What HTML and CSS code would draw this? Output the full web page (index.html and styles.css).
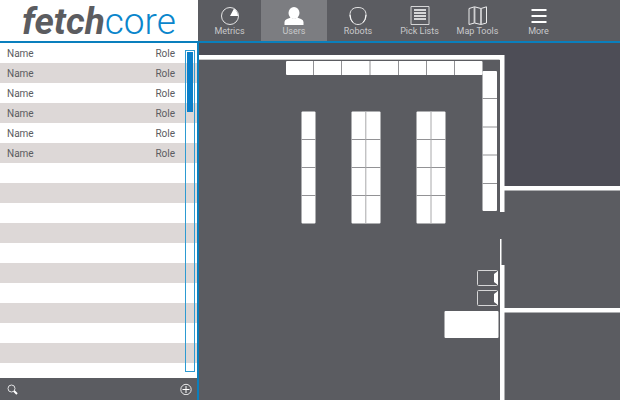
FILE: index.html
```html
<!DOCTYPE html>
<html lang="en">
<head>
<meta charset="utf-8">
<title>fetchcore</title>
<link rel="stylesheet" href="styles.css">
</head>
<body>
<div class="app">
  <header class="topbar">
    <div class="logo"><span class="logo-fetch">fetch</span><span class="logo-core">core</span></div>
    <nav class="nav">
      <button class="nav-item" type="button">
        <svg class="icon" viewBox="0 0 20 20"><circle cx="10" cy="10" r="8.5" fill="none" stroke="#e4e4e5"/><path d="M10 10L14 2.5Q17.5 5 18 10Z" fill="#fff"/></svg>
        <span>Metrics</span>
      </button>
      <button class="nav-item active" type="button">
        <svg class="icon" viewBox="0 0 20 20"><ellipse cx="10" cy="7" rx="5.5" ry="6" fill="#fff"/><path d="M.5 19V16Q.5 14 3 13L7 11.5Q10 14 13 11.5L17 13Q19.5 14 19.5 16V19Z" fill="#fff"/></svg>
        <span>Users</span>
      </button>
      <button class="nav-item" type="button">
        <svg class="icon" viewBox="0 0 20 20"><path d="M10 1.500C15.500 1.500 18 4.500 18 9C18 14 15 18.500 10 18.500S2 14 2 9C2 4.500 4.500 1.500 10 1.500Z" fill="none" stroke="#e4e4e5"/><path d="M2 9Q2.500 14 5 16.500M18 9Q17.500 14 15 16.500" fill="none" stroke="#fff"/></svg>
        <span>Robots</span>
      </button>
      <button class="nav-item" type="button">
        <svg class="icon" viewBox="0 0 20 20"><path d="M1 .5H19V18.500H1Z" fill="none" stroke="#d5d5d6"/><path d="M4 4H16M4 7H16M4 10H16M4 13H16" stroke="#fff" stroke-width="1.500"/></svg>
        <span>Pick Lists</span>
      </button>
      <button class="nav-item" type="button">
        <svg class="icon" viewBox="0 0 20 20"><path d="M1 2.500L6.500 .8L13 2.500L18.500 .8V17L13 18.500L6.500 17L1 18.500Z" fill="none" stroke="#ececed"/><path d="M6.500 1V17M13 2.500V18.500" stroke="#cfcfd1" stroke-width="1.800"/></svg>
        <span>Map Tools</span>
      </button>
      <button class="nav-item" type="button">
        <svg class="icon" viewBox="0 0 20 20"><path d="M2.500 4H17.500M2.500 10H17.500M2.500 16H17.500" stroke="#fff" stroke-width="2"/></svg>
        <span>More</span>
      </button>
    </nav>
  </header>
  <aside class="sidebar">
    <div class="list">
      <table class="users">
        <tbody>
          <tr><td>Name</td><td class="role">Role</td></tr>
          <tr><td>Name</td><td class="role">Role</td></tr>
          <tr><td>Name</td><td class="role">Role</td></tr>
          <tr><td>Name</td><td class="role">Role</td></tr>
          <tr><td>Name</td><td class="role">Role</td></tr>
          <tr><td>Name</td><td class="role">Role</td></tr>
        </tbody>
      </table>
      <div class="track"><div class="thumb"></div></div>
    </div>
    <div class="tools">
      <button class="tool" type="button" aria-label="Search"><svg viewBox="0 0 12 12"><circle cx="4.500" cy="5.500" r="3.500" fill="none" stroke="#e0e0e1"/><path d="M7 8L10 11" stroke="#fff" stroke-width="2"/></svg></button>
      <button class="tool" type="button" aria-label="Add"><svg viewBox="0 0 12 12"><circle cx="6" cy="6.500" r="5.200" fill="none" stroke="#e8e8e9"/><path d="M6 3V10M2.500 6.500H9.500" stroke="#fff"/></svg></button>
    </div>
  </aside>
  <main class="map">
    <svg class="floor" viewBox="199 43 421 357" preserveAspectRatio="xMinYMin slice" role="img" aria-label="Warehouse floor map">
      <path d="M199 43H620V188H504V57H199Z" fill="#4d4d56"/>
      <g fill="#fff">
        <path d="M199 55H504.500V212H500V60H199Z"/>
        <path d="M504 186H620V190.500H504ZM504 308H620V312.500H504Z"/>
        <path d="M500 239H501.500V265H504.500V400H500Z"/>
        <rect x="444.500" y="311" width="54" height="27" rx="1"/>
      </g>
      <path d="M199 59.500H499.500" stroke="#c9c9ca"/>
      <g fill="#fff">
        <rect x="286" y="61" width="196.500" height="14" rx="1"/>
        <rect x="482.500" y="71" width="14.500" height="140" rx="1"/>
        <rect x="301.500" y="111.500" width="14" height="112" rx="1"/>
        <rect x="351.500" y="111.500" width="29" height="112" rx="1"/>
        <rect x="416.500" y="111.500" width="29" height="112" rx="1"/>
      </g>
      <g stroke="#929295">
        <path d="M313.500 61V75M341.500 61V75M370 61V75M398.500 61V75M426.500 61V75M454.500 61V75"/>
        <path d="M482.500 98.500H497M482.500 127H497M482.500 155H497M482.500 183.500H497"/>
        <path d="M301.500 139.500H315.500M301.500 167.500H315.500M301.500 195.500H315.500M351.500 139.500H380.500M351.500 167.500H380.500M351.500 195.500H380.500M416.500 139.500H445.500M416.500 167.500H445.500M416.500 195.500H445.500"/>
        <path d="M365.800 112V223M431 112V223" stroke="#a8a8aa"/>
      </g>
      <g fill="none" stroke="#d6d6d7">
        <rect x="477.500" y="270.500" width="20" height="15" rx="1"/>
        <rect x="477.500" y="290.500" width="20" height="15" rx="1"/>
      </g>
      <path d="M498 271L494 274V282L498 285ZM498 291L494 294V302L498 305Z" fill="#fff"/>
    </svg>
  </main>
</div>
</body>
</html>
```
FILE: styles.css
```css
* {
  box-sizing: border-box;
}

body {
  margin: 0;
  font-family: Roboto, "Liberation Sans", sans-serif;
  font-size: 10px;
  color: #5b5c60;
}

button {
  border: 0;
  padding: 0;
  background: none;
  font: inherit;
  color: inherit;
}

.app {
  display: grid;
  grid-template-columns: 199px 1fr;
  grid-template-rows: auto 1fr;
  height: 100vh;
}

.topbar {
  grid-column: 1 / -1;
  display: grid;
  grid-template-columns: 198px 1fr;
  grid-template-rows: 41px;
  border-bottom: 2px solid #0a7fbd;
}

.logo {
  padding-left: 22px;
  font-size: 37px;
  line-height: 44px;
  white-space: nowrap;
}

.logo-fetch {
  font-weight: 700;
  font-style: italic;
}

.logo-core {
  font-weight: 300;
  color: #0a86cc;
}

.nav {
  display: grid;
  grid-template-columns: 63px 66px 62px 61px 55px 67px;
  background: #5b5c61;
}

.nav-item {
  display: flex;
  flex-direction: column;
  align-items: center;
  padding-top: 6px;
  font-size: 9px;
  line-height: 10px;
  color: #c9c9cb;
  white-space: nowrap;
}

.nav-item.active {
  background: #7c7d81;
}

.icon {
  display: block;
  width: 20px;
  height: 20px;
}

.sidebar {
  display: flex;
  flex-direction: column;
  min-height: 0;
  border-right: 2px solid #0a7fbd;
}

.list {
  position: relative;
  flex: 1;
  min-height: 0;
  background: repeating-linear-gradient(#fff 0 20px, #ddd8d7 20px 40px);
}

.users {
  width: 100%;
  border-collapse: collapse;
}

.users td {
  height: 20px;
  padding: 2px 0 0 7px;
  line-height: 18px;
}

.users .role {
  padding-right: 22px;
  text-align: right;
}

.track {
  position: absolute;
  top: 7px;
  right: 2px;
  bottom: 6px;
  width: 10px;
  padding: 1px;
  border: 1px solid #2d9bd2;
}

.thumb {
  height: 60px;
  background: #0a7fc9;
}

.tools {
  display: flex;
  justify-content: space-between;
  align-items: center;
  height: 22px;
  padding: 0 5px 0 7px;
  background: #5b5c61;
}

.tool {
  width: 12px;
  height: 12px;
}

.tool svg {
  display: block;
}

.map {
  min-width: 0;
  min-height: 0;
  background: #5b5c61;
}

.floor {
  display: block;
  width: 100%;
  height: 100%;
}
```
